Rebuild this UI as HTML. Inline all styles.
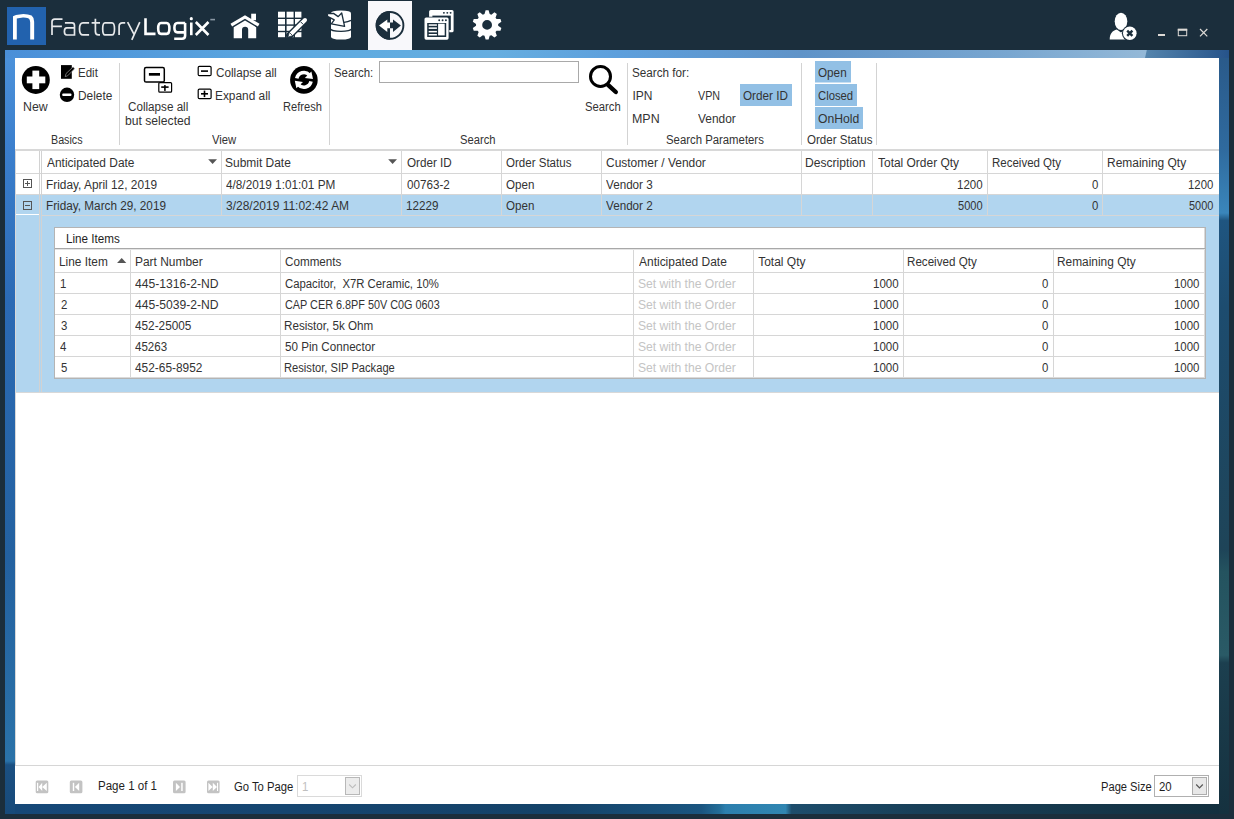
<!DOCTYPE html>
<html><head><meta charset="utf-8"><title>FactoryLogix</title>
<style>
html,body{margin:0;padding:0;width:1234px;height:819px;overflow:hidden;background:#1b2e3c;}
.t{position:absolute;white-space:pre;line-height:16px;font-family:"Liberation Sans", sans-serif;transform-origin:0 0;}
svg{position:absolute;left:0;top:0;}
</style></head><body>
<svg width="1234" height="819" viewBox="0 0 1234 819">
<defs>
<linearGradient id="gtop" x1="0" x2="1" y1="0" y2="0">
 <stop offset="0" stop-color="#4a8fd8"/><stop offset="0.25" stop-color="#5eaae0"/><stop offset="0.4" stop-color="#66aee0"/>
 <stop offset="0.5" stop-color="#5d9fdc"/><stop offset="0.65" stop-color="#5f93c8"/>
 <stop offset="0.82" stop-color="#78a6d0"/><stop offset="0.94" stop-color="#96bad8"/><stop offset="1" stop-color="#26538a"/></linearGradient>
<linearGradient id="gleft" x1="0" x2="0" y1="0" y2="1">
 <stop offset="0" stop-color="#4b91da"/><stop offset="0.12" stop-color="#3b7fcd"/>
 <stop offset="0.32" stop-color="#2b6ab5"/><stop offset="0.66" stop-color="#2361a0"/>
 <stop offset="0.93" stop-color="#2a72a8"/><stop offset="0.935" stop-color="#1b5082"/>
 <stop offset="1" stop-color="#174a7a"/></linearGradient>
<linearGradient id="gright" x1="0" x2="0" y1="0" y2="1">
 <stop offset="0" stop-color="#2a5a8a"/><stop offset="0.12" stop-color="#2f6a9e"/>
 <stop offset="0.205" stop-color="#3a86bb"/><stop offset="0.215" stop-color="#1f5580"/>
 <stop offset="0.33" stop-color="#1d4c6f"/><stop offset="0.65" stop-color="#1e4458"/>
 <stop offset="0.68" stop-color="#24535f"/><stop offset="0.79" stop-color="#2a5a66"/>
 <stop offset="0.8" stop-color="#1c3f4f"/><stop offset="1" stop-color="#15313f"/></linearGradient>
<linearGradient id="gbot" x1="0" x2="1" y1="0" y2="0">
 <stop offset="0" stop-color="#164878"/><stop offset="0.45" stop-color="#144268"/>
 <stop offset="0.57" stop-color="#1a5580"/><stop offset="0.585" stop-color="#236d98"/>
 <stop offset="0.59" stop-color="#2c7fae"/><stop offset="0.64" stop-color="#3086b2"/>
 <stop offset="0.645" stop-color="#1d4d6c"/><stop offset="0.75" stop-color="#183f58"/>
 <stop offset="1" stop-color="#13303f"/></linearGradient>
</defs>
<rect x="0" y="0" width="1234" height="819" fill="#1b2e3c" />
<rect x="7" y="7" width="39" height="38" fill="#2262ae" />
<path d="M13,39.6 V16.2 L16,15 Q19.5,14.1 23.4,13.9 Q28.2,13.9 31.6,15.6 Q34.15,17.6 34.15,21.8 V39.6 H30.2 V22.2 Q30.2,19.3 28.3,18.3 Q25.8,17.4 23,17.5 Q19.5,17.8 16.8,18.6 V39.6 Z" fill="#fff"/>
<path d="M52,35.1 V21.8 Q52,19.1 54.7,19.1 H62.5 M52,26.4 H61.9" fill="none" stroke="#e6e8ea" stroke-width="1.7" stroke-linecap="butt"/>
<path d="M64.9,22.9 H72 Q74.5,22.9 74.5,25.4 V35 H66.8 Q64.4,35 64.4,31.5 Q64.4,27.9 66.8,27.9 H74.5" fill="none" stroke="#e6e8ea" stroke-width="1.7" stroke-linecap="butt"/>
<path d="M89.1,22.9 H83 Q79.5,22.9 79.5,28.9 Q79.5,34.9 83,34.9 H89.1" fill="none" stroke="#e6e8ea" stroke-width="1.7" stroke-linecap="butt"/>
<path d="M95.4,18.8 V31.5 Q95.4,34.9 98.5,34.9 H100 M91.6,22.9 H100" fill="none" stroke="#e6e8ea" stroke-width="1.7" stroke-linecap="butt"/>
<path d="M105,22.8 H112 Q114.5,22.8 114.5,28.9 Q114.5,34.9 112,34.9 H105 Q102.7,34.9 102.7,28.9 Q102.7,22.8 105,22.8 Z" fill="none" stroke="#e6e8ea" stroke-width="1.7" stroke-linecap="butt"/>
<path d="M119.1,35.1 V26.5 Q119.1,22.8 122.5,22.8 H125.2" fill="none" stroke="#e6e8ea" stroke-width="1.7" stroke-linecap="butt"/>
<path d="M127.6,22.2 L134.2,34.6 M139.8,22.2 L131.8,39.9" fill="none" stroke="#e6e8ea" stroke-width="1.7" stroke-linecap="butt"/>
<path d="M145.5,18.2 V33.9 H155.5" fill="none" stroke="#ffffff" stroke-width="2.6" stroke-linecap="butt"/>
<path d="M161,23 H166.5 Q169.4,23 169.4,28.5 Q169.4,33.9 166.5,33.9 H161 Q158.2,33.9 158.2,28.5 Q158.2,23 161,23 Z" fill="none" stroke="#ffffff" stroke-width="2.6" stroke-linecap="butt"/>
<path d="M185.2,23 H177.5 Q174.4,23 174.4,27.8 Q174.4,32.4 177.5,32.4 H185.2 M185.1,23 V35.8 Q185.1,38.7 182,38.7 H174.2" fill="none" stroke="#ffffff" stroke-width="2.6" stroke-linecap="butt"/>
<path d="M191.3,22.5 V35.2" fill="none" stroke="#ffffff" stroke-width="2.6" stroke-linecap="butt"/><circle cx="191.3" cy="18.7" r="1.6" fill="#fff"/>
<path d="M195.8,22 L208.5,35 M208.5,22 L195.8,35" fill="none" stroke="#ffffff" stroke-width="2.6" stroke-linecap="butt"/>
<rect x="210.3" y="18.8" width="4.7" height="1.6" fill="#8a98a4"/>
<polyline points="231.3,25.2 245,17 258.7,25.2" fill="none" stroke="#fff" stroke-width="3.2"/>
<rect x="251.2" y="13.7" width="4.8" height="6.5" fill="#fff" />
<path d="M233.7,38.2 V27.2 L245,20.6 L256.2,27.2 V38.2 H248.2 V29.8 A3.1,3.1 0 0 0 242,29.8 V38.2 Z" fill="#fff"/>
<rect x="278" y="11.7" width="7" height="5.9" fill="#fff" />
<rect x="278" y="19" width="7" height="5.4" fill="#fff" />
<rect x="278" y="25.8" width="7" height="5.0" fill="#fff" />
<rect x="278" y="32.2" width="7" height="5.0" fill="#fff" />
<rect x="286.6" y="11.7" width="7.0" height="5.9" fill="#fff" />
<rect x="286.6" y="19" width="7.0" height="5.4" fill="#fff" />
<rect x="286.6" y="25.8" width="7.0" height="5.0" fill="#fff" />
<rect x="286.6" y="32.2" width="7.0" height="5.0" fill="#fff" />
<rect x="295" y="11.7" width="6.4" height="5.9" fill="#fff" />
<rect x="295" y="19" width="6.4" height="5.4" fill="#fff" />
<rect x="295" y="25.8" width="6.4" height="5.0" fill="#fff" />
<rect x="295" y="32.2" width="6.4" height="5.0" fill="#fff" />
<path d="M289.5,35.5 L305,20" stroke="#1b2e3c" stroke-width="6.8" stroke-linecap="round"/>
<path d="M291,34 L305,20" stroke="#fff" stroke-width="4" stroke-linecap="round"/>
<path d="M287.8,37.2 L289.3,32.3 L292.7,35.7 Z" fill="#fff" stroke="#1b2e3c" stroke-width="0.8"/>
<path d="M300.8,22 L303.2,24.4" stroke="#1b2e3c" stroke-width="1"/>
<path d="M331,13.2 Q331,10.4 341,10.4 Q351,10.4 351,13.2 V36.8 Q351,39.6 341,39.6 Q331,39.6 331,36.8 Z" fill="#fff"/>
<path d="M330.5,28.8 A10.5,2.6 0 0 0 351.5,28.8" fill="none" stroke="#1b2e3c" stroke-width="1.4"/>
<path d="M344,22.4 Q348,22 351,20.4" fill="none" stroke="#1b2e3c" stroke-width="1.4"/>
<path d="M327.8,13.6 L333.5,13.4 L338.2,16.6 L341.7,13 L344.6,26.3 L331.3,23.9 L334.3,19.9 L328,16.6 Q326.6,15.1 327.8,13.6 Z" fill="#fff" stroke="#1b2e3c" stroke-width="1.3" stroke-linejoin="round"/>
<rect x="368" y="1" width="44" height="49" fill="#f8f8fb" />
<circle cx="390" cy="25.4" r="13.4" fill="none" stroke="#1b2e3c" stroke-width="1.9"/>
<path d="M390,11.1 A14.3,14.3 0 0 0 390,39.7 Z" fill="#1b2e3c"/>
<path d="M379,25.4 L387.3,19.4 V22.6 H390 V28.3 H387.3 V31.9 Z" fill="#fff"/>
<path d="M400.9,25.4 L393,19.4 V22.6 H390 V28.3 H393 V31.9 Z" fill="#1b2e3c"/>
<rect x="429.1" y="10.1" width="24.5" height="22.2" rx="1.6" fill="#fff"/>
<rect x="432.4" y="15.6" width="18.4" height="14.4" fill="#1b2e3c" />
<circle cx="443.9" cy="12.85" r="0.95" fill="#1b2e3c"/>
<circle cx="447.3" cy="12.85" r="0.95" fill="#1b2e3c"/>
<circle cx="450.6" cy="12.85" r="0.95" fill="#1b2e3c"/>
<rect x="423.8" y="16.8" width="25.5" height="23.6" rx="2" fill="#1b2e3c"/>
<rect x="424.5" y="17.5" width="24.1" height="22.2" rx="1.6" fill="#fff"/>
<rect x="427.2" y="23" width="19" height="14" fill="#1b2e3c" />
<circle cx="439.2" cy="20.2" r="0.95" fill="#1b2e3c"/>
<circle cx="442.6" cy="20.2" r="0.95" fill="#1b2e3c"/>
<circle cx="445.9" cy="20.2" r="0.95" fill="#1b2e3c"/>
<rect x="428.7" y="24.3" width="8.2" height="1.5" fill="#fff" />
<rect x="428.7" y="27.4" width="8.2" height="1.5" fill="#fff" />
<rect x="428.7" y="30.9" width="8.2" height="1.5" fill="#fff" />
<rect x="428.7" y="34.0" width="8.2" height="1.5" fill="#fff" />
<rect x="438.1" y="23.7" width="6.6" height="11.7" fill="#fff" />
<path d="M484.51,14.11 L485.62,10.37 L488.58,10.37 L489.69,14.11 L491.35,14.64 L494.44,12.28 L496.83,14.02 L495.54,17.69 L496.56,19.10 L500.46,19.01 L501.37,21.81 L498.17,24.03 L498.17,25.77 L501.37,27.99 L500.46,30.79 L496.56,30.70 L495.54,32.11 L496.83,35.78 L494.44,37.52 L491.35,35.16 L489.69,35.69 L488.58,39.43 L485.62,39.43 L484.51,35.69 L482.85,35.16 L479.76,37.52 L477.37,35.78 L478.66,32.11 L477.64,30.70 L473.74,30.79 L472.83,27.99 L476.03,25.77 L476.03,24.03 L472.83,21.81 L473.74,19.01 L477.64,19.10 L478.66,17.69 L477.37,14.02 L479.76,12.28 L482.85,14.64 Z M492.0,24.9 A4.9,4.9 0 1 0 482.20000000000005,24.9 A4.9,4.9 0 1 0 492.0,24.9 Z" fill="#fff" fill-rule="evenodd"/>
<ellipse cx="1121" cy="21.3" rx="6.3" ry="8.6" fill="#fff"/>
<path d="M1109.7,39.5 C1109.8,33.5 1112.5,30.8 1116.8,29.6 L1121,32.6 L1125.2,29.6 C1127,30.1 1128.5,31 1129.7,32.3 V39.5 Z" fill="#fff"/>
<circle cx="1129.8" cy="33.3" r="7.9" fill="#1b2e3c"/><circle cx="1129.8" cy="33.3" r="6.8" fill="#fff"/>
<path d="M1127.2,30.7 L1132.4,35.9 M1132.4,30.7 L1127.2,35.9" stroke="#1b2e3c" stroke-width="2.4"/>
<rect x="1158" y="34" width="7" height="2" fill="#dedad6" />
<rect x="1178.3" y="29.3" width="8.4" height="6.4" fill="none" stroke="#dedad6" stroke-width="1"/>
<rect x="1177.8" y="28.8" width="9.4" height="2" fill="#dedad6" />
<path d="M1200,29 L1207.3,36.3 M1207.3,29 L1200,36.3" stroke="#dedad6" stroke-width="1.2"/>
<rect x="5" y="50" width="1224" height="8" fill="url(#gtop)" />
<defs><linearGradient id="gtop2" x1="0" x2="1" y1="0" y2="0"><stop offset="0" stop-color="#5585ad"/><stop offset="1" stop-color="#26538a"/></linearGradient></defs>
<polygon points="1146.8,50 1229,50 1229,58 1145,58" fill="url(#gtop2)"/>
<rect x="5" y="58" width="10" height="756" fill="url(#gleft)" />
<rect x="1219" y="58" width="10" height="756" fill="url(#gright)" />
<rect x="15" y="804" width="1204" height="10" fill="url(#gbot)" />
<rect x="368" y="50" width="44" height="0" fill="#f5f6f8" />
<rect x="15" y="58" width="1204" height="746" fill="#ffffff" />
<rect x="119" y="63" width="1" height="82" fill="#d3d3d3" />
<rect x="329" y="63" width="1" height="82" fill="#d3d3d3" />
<rect x="627" y="63" width="1" height="82" fill="#d3d3d3" />
<rect x="801" y="63" width="1" height="82" fill="#d3d3d3" />
<rect x="876" y="63" width="1" height="82" fill="#d3d3d3" />
<rect x="15" y="149" width="1204" height="2" fill="#d8d8d8" />
<circle cx="35.8" cy="79.9" r="14" fill="#000"/>
<rect x="26.8" y="76.5" width="18.5" height="6.8" fill="#fff" />
<rect x="32.4" y="70.6" width="6.8" height="18.5" fill="#fff" />
<rect x="61" y="65.1" width="10.8" height="13.7" fill="#000" />
<path d="M65.2,76.6 L66,73.6 L72.4,67.6 Q73.5,66.8 74.2,68 Q74.6,68.8 73.8,69.6 L67.6,75.8 Z" fill="#000" stroke="#9a9a9a" stroke-width="0.7"/>
<circle cx="67" cy="94.8" r="7.2" fill="#000"/>
<rect x="62.2" y="93.6" width="9.3" height="2.5" rx="1" fill="#fff"/>
<rect x="144.5" y="67.6" width="19.8" height="14.4" rx="1.6" fill="#fff" stroke="#000" stroke-width="1.5"/>
<rect x="148.9" y="73" width="11.1" height="2.7" fill="#000" />
<rect x="158.8" y="82.6" width="12.8" height="9.6" rx="1" fill="#fff" stroke="#000" stroke-width="1.2"/>
<rect x="161.2" y="86.3" width="7.4" height="1.6" fill="#000" />
<rect x="164.1" y="85.1" width="1.6" height="5.8" fill="#000" />
<rect x="198.2" y="66.3" width="12.9" height="9.4" rx="1.2" fill="#fff" stroke="#000" stroke-width="1.2"/>
<rect x="201" y="70.3" width="7" height="1.6" fill="#000" />
<rect x="198.2" y="89.1" width="12.9" height="9.6" rx="1.2" fill="#fff" stroke="#000" stroke-width="1.2"/>
<rect x="201" y="93" width="7" height="1.6" fill="#000" />
<rect x="203.7" y="90.6" width="1.6" height="6.5" fill="#000" />
<circle cx="303.9" cy="79.9" r="13.8" fill="#000"/>
<path d="M296.76,78.38 A7.3,7.3 0 0 1 309.32,75.02" fill="none" stroke="#fff" stroke-width="3.6"/>
<path d="M304.8,77.9 L311.4,71.6 L313,79 Z" fill="#fff"/>
<path d="M311.04,81.42 A7.3,7.3 0 0 1 298.48,84.78" fill="none" stroke="#fff" stroke-width="3.6"/>
<path d="M303,81.9 L296.4,88.2 L294.8,80.8 Z" fill="#fff"/>
<rect x="379.5" y="61.5" width="199" height="21" fill="#fff" stroke="#a9a9a9" stroke-width="1"/>
<circle cx="600.5" cy="76.4" r="10" fill="none" stroke="#000" stroke-width="3"/>
<path d="M608,84.8 L615.8,92" stroke="#000" stroke-width="4.4" stroke-linecap="round"/>
<rect x="740" y="84" width="52" height="22" fill="#92c0e5" />
<rect x="815" y="61" width="36" height="21.5" fill="#92c0e5" />
<rect x="815" y="84" width="42" height="22" fill="#92c0e5" />
<rect x="815" y="107" width="48" height="22" fill="#92c0e5" />
<rect x="16" y="195" width="1203" height="197" fill="#b1d5ef" />
<rect x="15" y="151" width="1" height="614" fill="#d8d8d8" />
<rect x="16" y="173" width="1203" height="1" fill="#d6d6d6" />
<rect x="16" y="194" width="1203" height="1" fill="#d6d6d6" />
<rect x="41" y="215" width="1178" height="1" fill="#d6d6d6" />
<rect x="16" y="214" width="23" height="1" fill="#ffffff" />
<rect x="39" y="151" width="1" height="241" fill="#d2d2d2" />
<rect x="41" y="151" width="1" height="241" fill="#d2d2d2" />
<rect x="221" y="151" width="1" height="64" fill="#d6d6d6" />
<rect x="401" y="151" width="1" height="64" fill="#d6d6d6" />
<rect x="501" y="151" width="1" height="64" fill="#d6d6d6" />
<rect x="601" y="151" width="1" height="64" fill="#d6d6d6" />
<rect x="801" y="151" width="1" height="64" fill="#d6d6d6" />
<rect x="872" y="151" width="1" height="64" fill="#d6d6d6" />
<rect x="987" y="151" width="1" height="64" fill="#d6d6d6" />
<rect x="1102" y="151" width="1" height="64" fill="#d6d6d6" />
<rect x="16" y="392" width="1203" height="1" fill="#d8d8d8" />
<path d="M208.2,159.2 H217 L212.6,163.9 Z" fill="#555"/>
<path d="M388.2,159.2 H397 L392.6,163.9 Z" fill="#555"/>
<rect x="23.5" y="179.5" width="8" height="8" fill="#fff" stroke="#555" stroke-width="1"/>
<rect x="25" y="183" width="5" height="1" fill="#555" />
<rect x="27" y="181" width="1" height="5" fill="#555" />
<rect x="23.5" y="201.5" width="8" height="8" fill="none" stroke="#555" stroke-width="1"/>
<rect x="25" y="205" width="5" height="1" fill="#555" />
<rect x="54" y="227" width="1152" height="152" fill="#ffffff" />
<rect x="54.5" y="227.5" width="1151" height="151" fill="none" stroke="#b4b4b4" stroke-width="1"/>
<rect x="55" y="377" width="1150" height="1" fill="#dadada" />
<rect x="1204" y="228" width="1" height="150" fill="#dadada" />
<rect x="55" y="248" width="1150" height="1" fill="#a8a8a8" />
<rect x="55" y="249" width="1150" height="1" fill="#e4e4e4" />
<rect x="130" y="250" width="1" height="127" fill="#d6d6d6" />
<rect x="280" y="250" width="1" height="127" fill="#d6d6d6" />
<rect x="633" y="250" width="1" height="127" fill="#d6d6d6" />
<rect x="753" y="250" width="1" height="127" fill="#d6d6d6" />
<rect x="903" y="250" width="1" height="127" fill="#d6d6d6" />
<rect x="1053" y="250" width="1" height="127" fill="#d6d6d6" />
<rect x="55" y="272" width="1149" height="1" fill="#d6d6d6" />
<rect x="55" y="293" width="1149" height="1" fill="#d6d6d6" />
<rect x="55" y="314" width="1149" height="1" fill="#d6d6d6" />
<rect x="55" y="335" width="1149" height="1" fill="#d6d6d6" />
<rect x="55" y="356" width="1149" height="1" fill="#d6d6d6" />
<path d="M117.1,262.9 H126.3 L121.7,258 Z" fill="#555"/>
<rect x="15" y="765" width="1204" height="1" fill="#d6d6d6" />
<rect x="35.7" y="780.6" width="12.6" height="12.6" rx="1.5" fill="#c3c3c3"/>
<rect x="69.8" y="780.6" width="12.6" height="12.6" rx="1.5" fill="#c3c3c3"/>
<rect x="173" y="780.6" width="12.6" height="12.6" rx="1.5" fill="#c3c3c3"/>
<rect x="207" y="780.6" width="12.6" height="12.6" rx="1.5" fill="#c3c3c3"/>
<rect x="37" y="782.8" width="1.2" height="8.2" fill="#fff"/><path d="M38.6,786.9 L42.2,782.8 V791 Z M42.2,786.9 L46.8,782.8 V791 Z" fill="#fff"/>
<rect x="72.8" y="782.8" width="1.4" height="8.2" fill="#fff"/><path d="M74.9,786.9 L79.2,782.8 V791 Z" fill="#fff"/>
<path d="M180,786.9 L175.9,782.8 V791 Z" fill="#fff"/><rect x="181.2" y="782.8" width="1.5" height="8.2" fill="#fff"/>
<path d="M212.6,786.9 L208.4,782.8 V791 Z M217,786.9 L212.8,782.8 V791 Z" fill="#fff"/><rect x="217" y="782.8" width="1.1" height="8.2" fill="#fff"/>
<rect x="297.5" y="775.5" width="64" height="21" fill="#fff" stroke="#dadada" stroke-width="1"/>
<rect x="345.5" y="777.5" width="14" height="17" fill="#ececec" stroke="#b8b8b8" stroke-width="1"/>
<path d="M349.2,784.5 L352.5,787.8 L355.8,784.5" fill="none" stroke="#bdbdbd" stroke-width="1.1"/>
<rect x="1154.5" y="775.5" width="54" height="21" fill="#fff" stroke="#b0b0b0" stroke-width="1"/>
<rect x="1192.5" y="777.5" width="14" height="17" fill="#e8e8e8" stroke="#adadad" stroke-width="1"/>
<path d="M1196.2,784.5 L1199.5,787.8 L1202.8,784.5" fill="none" stroke="#555" stroke-width="1.2"/>
</svg>
<div class="t" style="left:23.47px;top:98.64px;font-size:12px;color:#333333;transform:scaleX(1.0261)">New</div>
<div class="t" style="left:77.94px;top:65.04px;font-size:12px;color:#333333;transform:scaleX(0.9600)">Edit</div>
<div class="t" style="left:78.01px;top:87.64px;font-size:12px;color:#333333;transform:scaleX(0.9879)">Delete</div>
<div class="t" style="left:51.11px;top:131.84px;font-size:12px;color:#333333;transform:scaleX(0.8941)">Basics</div>
<div class="t" style="left:127.90px;top:98.64px;font-size:12px;color:#333333;transform:scaleX(0.9721)">Collapse all</div>
<div class="t" style="left:124.59px;top:112.74px;font-size:12px;color:#333333;transform:scaleX(1.0127)">but selected</div>
<div class="t" style="left:216.00px;top:65.04px;font-size:12px;color:#333333;transform:scaleX(0.9770)">Collapse all</div>
<div class="t" style="left:215.01px;top:87.64px;font-size:12px;color:#333333;transform:scaleX(0.9889)">Expand all</div>
<div class="t" style="left:212.40px;top:131.84px;font-size:12px;color:#333333;transform:scaleX(0.9385)">View</div>
<div class="t" style="left:283.38px;top:98.64px;font-size:12px;color:#333333;transform:scaleX(0.9244)">Refresh</div>
<div class="t" style="left:334.05px;top:65.04px;font-size:12px;color:#333333;transform:scaleX(0.9500)">Search:</div>
<div class="t" style="left:585.06px;top:98.64px;font-size:12px;color:#333333;transform:scaleX(0.9405)">Search</div>
<div class="t" style="left:460.37px;top:131.84px;font-size:12px;color:#333333;transform:scaleX(0.9324)">Search</div>
<div class="t" style="left:632.42px;top:65.04px;font-size:12px;color:#333333;transform:scaleX(0.9754)">Search for:</div>
<div class="t" style="left:632.40px;top:87.64px;font-size:12px;color:#333333;transform:scaleX(1.0000)">IPN</div>
<div class="t" style="left:698.00px;top:87.64px;font-size:12px;color:#333333;transform:scaleX(0.8917)">VPN</div>
<div class="t" style="left:743.30px;top:87.64px;font-size:12px;color:#333333;transform:scaleX(0.9761)">Order ID</div>
<div class="t" style="left:632.36px;top:110.84px;font-size:12px;color:#333333;transform:scaleX(1.0360)">MPN</div>
<div class="t" style="left:697.60px;top:110.84px;font-size:12px;color:#333333;transform:scaleX(0.9921)">Vendor</div>
<div class="t" style="left:665.55px;top:131.84px;font-size:12px;color:#333333;transform:scaleX(0.9461)">Search Parameters</div>
<div class="t" style="left:817.80px;top:65.04px;font-size:12px;color:#333333;transform:scaleX(0.9759)">Open</div>
<div class="t" style="left:817.80px;top:87.64px;font-size:12px;color:#333333;transform:scaleX(0.9405)">Closed</div>
<div class="t" style="left:817.80px;top:110.84px;font-size:12px;color:#333333;transform:scaleX(1.0150)">OnHold</div>
<div class="t" style="left:806.50px;top:131.84px;font-size:12px;color:#333333;transform:scaleX(0.9618)">Order Status</div>
<div class="t" style="left:46.50px;top:154.84px;font-size:12px;color:#333333;transform:scaleX(0.9932)">Anticipated Date</div>
<div class="t" style="left:225.20px;top:154.84px;font-size:12px;color:#333333;transform:scaleX(0.9969)">Submit Date</div>
<div class="t" style="left:406.50px;top:154.84px;font-size:12px;color:#333333;transform:scaleX(0.9739)">Order ID</div>
<div class="t" style="left:506.30px;top:154.84px;font-size:12px;color:#333333;transform:scaleX(0.9618)">Order Status</div>
<div class="t" style="left:606.20px;top:154.84px;font-size:12px;color:#333333;transform:scaleX(0.9980)">Customer / Vendor</div>
<div class="t" style="left:805.39px;top:154.84px;font-size:12px;color:#333333;transform:scaleX(1.0085)">Description</div>
<div class="t" style="left:877.70px;top:154.84px;font-size:12px;color:#333333;transform:scaleX(0.9963)">Total Order Qty</div>
<div class="t" style="left:991.84px;top:154.84px;font-size:12px;color:#333333;transform:scaleX(0.9577)">Received Qty</div>
<div class="t" style="left:1106.50px;top:154.84px;font-size:12px;color:#333333;transform:scaleX(0.9974)">Remaining Qty</div>
<div class="t" style="left:45.51px;top:176.84px;font-size:12px;color:#333333;transform:scaleX(0.9883)">Friday, April 12, 2019</div>
<div class="t" style="left:226.20px;top:176.84px;font-size:12px;color:#333333;transform:scaleX(0.9811)">4/8/2019 1:01:01 PM</div>
<div class="t" style="left:406.50px;top:176.84px;font-size:12px;color:#333333;transform:scaleX(0.9727)">00763-2</div>
<div class="t" style="left:506.30px;top:176.84px;font-size:12px;color:#333333;transform:scaleX(0.9655)">Open</div>
<div class="t" style="left:606.20px;top:176.84px;font-size:12px;color:#333333;transform:scaleX(0.9729)">Vendor 3</div>
<div class="t" style="left:45.52px;top:197.84px;font-size:12px;color:#333333;transform:scaleX(0.9793)">Friday, March 29, 2019</div>
<div class="t" style="left:226.20px;top:197.84px;font-size:12px;color:#333333;transform:scaleX(0.9992)">3/28/2019 11:02:42 AM</div>
<div class="t" style="left:405.53px;top:197.84px;font-size:12px;color:#333333;transform:scaleX(0.9719)">12229</div>
<div class="t" style="left:506.30px;top:197.84px;font-size:12px;color:#333333;transform:scaleX(0.9655)">Open</div>
<div class="t" style="left:606.20px;top:197.84px;font-size:12px;color:#333333;transform:scaleX(0.9729)">Vendor 2</div>
<div class="t" style="left:956.64px;top:176.84px;font-size:12px;color:#333333;transform:scaleX(0.9577)">1200</div>
<div class="t" style="left:1091.58px;top:176.84px;font-size:12px;color:#333333;transform:scaleX(0.9500)">0</div>
<div class="t" style="left:1188.25px;top:176.84px;font-size:12px;color:#333333;transform:scaleX(0.9462)">1200</div>
<div class="t" style="left:957.60px;top:197.84px;font-size:12px;color:#333333;transform:scaleX(0.9222)">5000</div>
<div class="t" style="left:1091.58px;top:197.84px;font-size:12px;color:#333333;transform:scaleX(0.9500)">0</div>
<div class="t" style="left:1189.20px;top:197.84px;font-size:12px;color:#333333;transform:scaleX(0.9111)">5000</div>
<div class="t" style="left:65.73px;top:230.84px;font-size:12px;color:#1e1e1e;transform:scaleX(0.9722)">Line Items</div>
<div class="t" style="left:59.41px;top:253.84px;font-size:12px;color:#333333;transform:scaleX(0.9896)">Line Item</div>
<div class="t" style="left:134.70px;top:253.84px;font-size:12px;color:#333333;transform:scaleX(0.9955)">Part Number</div>
<div class="t" style="left:285.40px;top:253.84px;font-size:12px;color:#333333;transform:scaleX(0.9724)">Comments</div>
<div class="t" style="left:638.60px;top:253.84px;font-size:12px;color:#333333;transform:scaleX(0.9977)">Anticipated Date</div>
<div class="t" style="left:758.20px;top:253.84px;font-size:12px;color:#333333;transform:scaleX(1.0000)">Total Qty</div>
<div class="t" style="left:907.33px;top:253.84px;font-size:12px;color:#333333;transform:scaleX(0.9676)">Received Qty</div>
<div class="t" style="left:1057.31px;top:253.84px;font-size:12px;color:#333333;transform:scaleX(0.9910)">Remaining Qty</div>
<div class="t" style="left:59.62px;top:275.84px;font-size:12px;color:#333333;transform:scaleX(0.9500)">1</div>
<div class="t" style="left:135.10px;top:275.84px;font-size:12px;color:#333333;transform:scaleX(1.0110)">445-1316-2-ND</div>
<div class="t" style="left:285.40px;top:275.84px;font-size:12px;color:#333333;transform:scaleX(0.9454)">Capacitor,  X7R Ceramic, 10%</div>
<div class="t" style="left:638.09px;top:275.84px;font-size:12px;color:#c4c4c4;transform:scaleX(1.0115)">Set with the Order</div>
<div class="t" style="left:872.94px;top:275.84px;font-size:12px;color:#333333;transform:scaleX(0.9615)">1000</div>
<div class="t" style="left:1042.38px;top:275.84px;font-size:12px;color:#333333;transform:scaleX(0.9500)">0</div>
<div class="t" style="left:1173.85px;top:275.84px;font-size:12px;color:#333333;transform:scaleX(0.9538)">1000</div>
<div class="t" style="left:60.50px;top:296.84px;font-size:12px;color:#333333;transform:scaleX(0.9500)">2</div>
<div class="t" style="left:135.10px;top:296.84px;font-size:12px;color:#333333;transform:scaleX(1.0110)">445-5039-2-ND</div>
<div class="t" style="left:285.40px;top:296.84px;font-size:12px;color:#333333;transform:scaleX(0.9035)">CAP CER 6.8PF 50V C0G 0603</div>
<div class="t" style="left:638.09px;top:296.84px;font-size:12px;color:#c4c4c4;transform:scaleX(1.0115)">Set with the Order</div>
<div class="t" style="left:872.94px;top:296.84px;font-size:12px;color:#333333;transform:scaleX(0.9615)">1000</div>
<div class="t" style="left:1042.38px;top:296.84px;font-size:12px;color:#333333;transform:scaleX(0.9500)">0</div>
<div class="t" style="left:1173.85px;top:296.84px;font-size:12px;color:#333333;transform:scaleX(0.9538)">1000</div>
<div class="t" style="left:60.50px;top:317.84px;font-size:12px;color:#333333;transform:scaleX(0.9500)">3</div>
<div class="t" style="left:135.10px;top:317.84px;font-size:12px;color:#333333;transform:scaleX(0.9825)">452-25005</div>
<div class="t" style="left:284.43px;top:317.84px;font-size:12px;color:#333333;transform:scaleX(0.9703)">Resistor, 5k Ohm</div>
<div class="t" style="left:638.09px;top:317.84px;font-size:12px;color:#c4c4c4;transform:scaleX(1.0115)">Set with the Order</div>
<div class="t" style="left:872.94px;top:317.84px;font-size:12px;color:#333333;transform:scaleX(0.9615)">1000</div>
<div class="t" style="left:1042.38px;top:317.84px;font-size:12px;color:#333333;transform:scaleX(0.9500)">0</div>
<div class="t" style="left:1173.85px;top:317.84px;font-size:12px;color:#333333;transform:scaleX(0.9538)">1000</div>
<div class="t" style="left:60.02px;top:338.84px;font-size:12px;color:#333333;transform:scaleX(0.9500)">4</div>
<div class="t" style="left:135.10px;top:338.84px;font-size:12px;color:#333333;transform:scaleX(0.9606)">45263</div>
<div class="t" style="left:285.40px;top:338.84px;font-size:12px;color:#333333;transform:scaleX(0.9710)">50 Pin Connector</div>
<div class="t" style="left:638.09px;top:338.84px;font-size:12px;color:#c4c4c4;transform:scaleX(1.0115)">Set with the Order</div>
<div class="t" style="left:872.94px;top:338.84px;font-size:12px;color:#333333;transform:scaleX(0.9615)">1000</div>
<div class="t" style="left:1042.38px;top:338.84px;font-size:12px;color:#333333;transform:scaleX(0.9500)">0</div>
<div class="t" style="left:1173.85px;top:338.84px;font-size:12px;color:#333333;transform:scaleX(0.9538)">1000</div>
<div class="t" style="left:60.50px;top:359.84px;font-size:12px;color:#333333;transform:scaleX(0.9500)">5</div>
<div class="t" style="left:135.10px;top:359.84px;font-size:12px;color:#333333;transform:scaleX(0.9897)">452-65-8952</div>
<div class="t" style="left:284.47px;top:359.84px;font-size:12px;color:#333333;transform:scaleX(0.9297)">Resistor, SIP Package</div>
<div class="t" style="left:638.09px;top:359.84px;font-size:12px;color:#c4c4c4;transform:scaleX(1.0115)">Set with the Order</div>
<div class="t" style="left:872.94px;top:359.84px;font-size:12px;color:#333333;transform:scaleX(0.9615)">1000</div>
<div class="t" style="left:1042.38px;top:359.84px;font-size:12px;color:#333333;transform:scaleX(0.9500)">0</div>
<div class="t" style="left:1173.85px;top:359.84px;font-size:12px;color:#333333;transform:scaleX(0.9538)">1000</div>
<div class="t" style="left:97.74px;top:777.84px;font-size:12px;color:#1e1e1e;transform:scaleX(0.9617)">Page 1 of 1</div>
<div class="t" style="left:234.40px;top:779.04px;font-size:12px;color:#1e1e1e;transform:scaleX(0.9381)">Go To Page</div>
<div class="t" style="left:302.07px;top:779.04px;font-size:12px;color:#c0c0c0;transform:scaleX(0.9500)">1</div>
<div class="t" style="left:1100.57px;top:778.54px;font-size:12px;color:#1e1e1e;transform:scaleX(0.9283)">Page Size</div>
<div class="t" style="left:1159.03px;top:778.54px;font-size:12px;color:#1e1e1e;transform:scaleX(0.9500)">20</div>
</body></html>
